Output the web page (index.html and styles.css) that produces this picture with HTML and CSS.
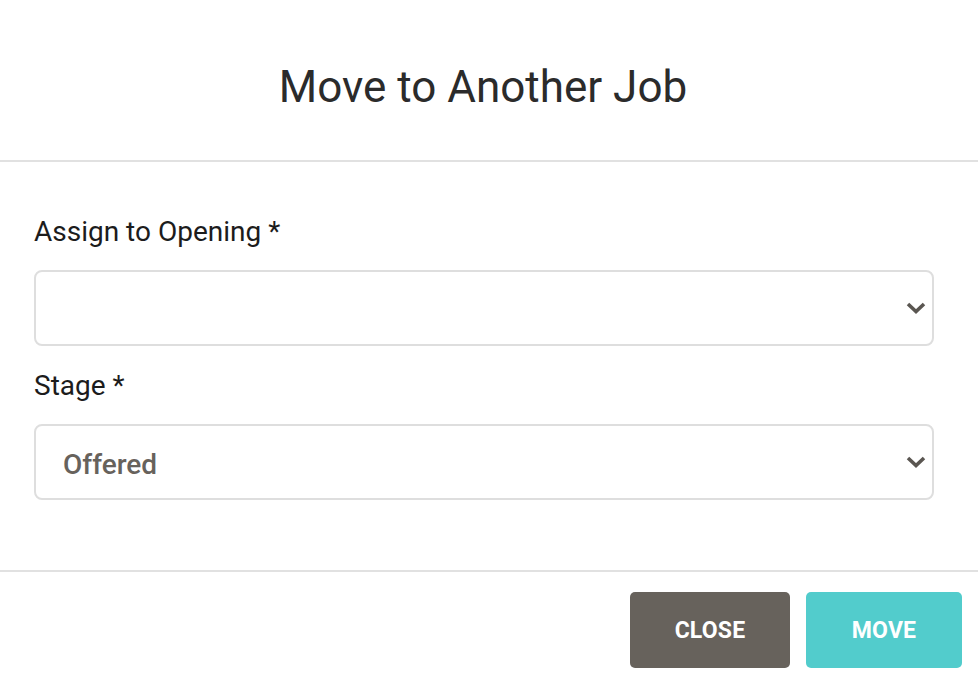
FILE: index.html
```html
<!DOCTYPE html>
<html>
<head>
<meta charset="utf-8">
<link rel="stylesheet" href="styles.css">
</head>
<body>
<div class="modal">
  <header class="modal-header">
    <h1 class="modal-title">Move to Another Job</h1>
  </header>
  <section class="modal-body">
    <div class="field">
      <label class="field-label">Assign to Opening *</label>
      <div class="select">
        <span class="select-value"></span>
        <svg class="chevron" viewBox="0 0 20 12" width="20" height="12"><path d="M2 2 L10 9.5 L18 2" fill="none" stroke="#5a5651" stroke-width="3.6" stroke-linecap="butt" stroke-linejoin="miter"/></svg>
      </div>
    </div>
    <div class="field">
      <label class="field-label">Stage *</label>
      <div class="select">
        <span class="select-value">Offered</span>
        <svg class="chevron" viewBox="0 0 20 12" width="20" height="12"><path d="M2 2 L10 9.5 L18 2" fill="none" stroke="#5a5651" stroke-width="3.6" stroke-linecap="butt" stroke-linejoin="miter"/></svg>
      </div>
    </div>
  </section>
  <footer class="modal-footer">
    <button class="btn btn-close">CLOSE</button>
    <button class="btn btn-move">MOVE</button>
  </footer>
</div>
</body>
</html>
```
FILE: styles.css
```css
html, body {
  margin: 0;
  padding: 0;
  background: #fff;
  font-family: Roboto, "Liberation Sans", sans-serif;
}
.modal {
  width: 978px;
}
.modal-header {
  height: 162px;
  border-bottom: 2px solid #e1e1e1;
  display: flex;
  align-items: center;
  justify-content: center;
  padding-right: 12px;
  box-sizing: border-box;
}
.modal-title {
  margin: 0;
  padding-top: 14px;
  font-size: 44px;
  font-weight: 400;
  color: #2b2b2b;
}
.modal-body {
  padding: 55px 44px 70px 34px;
  border-bottom: 2px solid #e1e1e1;
}
.field + .field {
  margin-top: 25px;
}
.field-label {
  display: block;
  font-size: 28px;
  line-height: 30px;
  color: #1c1c1c;
  margin-bottom: 23px;
}
.select {
  height: 72px;
  border: 2px solid #dedede;
  border-radius: 8px;
  display: flex;
  align-items: center;
  justify-content: space-between;
  padding: 0 6px 0 27px;
}
.select-value {
  font-size: 28px;
  font-weight: 500;
  color: #67625c;
  padding-top: 4px;
}
.chevron {
  display: block;
}
.modal-footer {
  display: flex;
  justify-content: flex-end;
  gap: 16px;
  padding: 20px 16px 0 0;
}
.btn {
  height: 76px;
  border: 0;
  border-radius: 5px;
  color: #fff;
  font-family: Roboto, "Liberation Sans", sans-serif;
  font-size: 23px;
  font-weight: 700;
  letter-spacing: 0.2px;
}
.btn-close {
  width: 160px;
  background: #67625c;
}
.btn-move {
  width: 156px;
  background: #52cccc;
}
```
